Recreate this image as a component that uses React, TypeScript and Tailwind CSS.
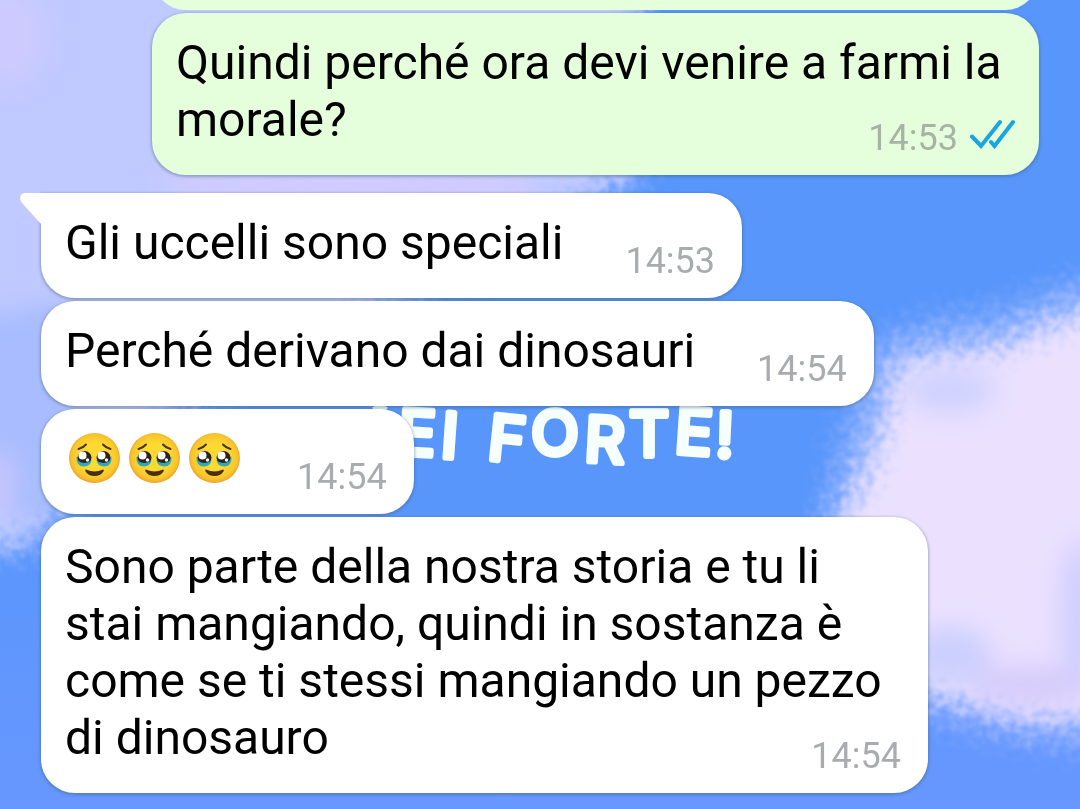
import type { ReactNode } from "react";

type Message = {
  body: ReactNode;
  time: string;
  spacing: string;
  tail?: boolean;
};

function Ticks() {
  return (
    <svg
      viewBox="0 0 46 30"
      className="-mt-[3px] h-[30px] w-[46px]"
      fill="none"
      stroke="#1ba5e0"
      strokeWidth="4"
      strokeLinecap="round"
      aria-label="Letto"
      role="img"
    >
      <path d="M3 17.500 L12 27 L31 3" />
      <path d="M22 23 L25.500 27 L44 3" />
    </svg>
  );
}

function TearyFace() {
  return (
    <svg viewBox="0 0 60 57" className="mt-[3px] h-[54px] w-[60px]" preserveAspectRatio="xMidYMin slice" role="img" aria-label="🥹">
      <defs>
        <radialGradient id="face" cx="50%" cy="48%" r="52%">
          <stop offset="0.5" stopColor="#fdda32" />
          <stop offset="0.85" stopColor="#f8c62c" />
          <stop offset="1" stopColor="#eda131" />
        </radialGradient>
      </defs>
      <ellipse cx="29.500" cy="25" rx="25.500" ry="25" fill="url(#face)" />
      <g fill="none" stroke="#4a3514" strokeWidth="2" strokeLinecap="round">
        <path d="M13.500 16 Q18 15 21 11.500" />
        <path d="M38 11.500 Q41 15 45.500 16" />
      </g>
      <path d="M11.500 24 Q11 33.500 19 33.500 Q25.500 33.500 26.500 27Z" fill="#2fa9bd" />
      <path d="M46.500 24 Q47 33.500 39 33.500 Q32.500 33.500 31.500 27Z" fill="#2fa9bd" />
      <ellipse cx="19.500" cy="24.500" rx="7" ry="6.500" fill="#2e2118" />
      <ellipse cx="38.500" cy="24.500" rx="7" ry="6.500" fill="#2e2118" />
      <path d="M13 28 Q19 31.500 25 28.500 Q23 31.500 19 31.500 Q15 31.500 13 28Z" fill="#2fa9bd" />
      <path d="M45 28 Q39 31.500 33 28.500 Q35 31.500 39 31.500 Q43 31.500 45 28Z" fill="#2fa9bd" />
      <circle cx="17.500" cy="22.500" r="4" fill="#fff" />
      <circle cx="36.500" cy="22.500" r="4" fill="#fff" />
      <circle cx="22.500" cy="27" r="1.700" fill="#fff" />
      <circle cx="41.500" cy="27" r="1.700" fill="#fff" />
      <path d="M21 36.500 Q29.500 40.500 38 36.500 Q39.500 36.500 38.500 38.500 Q35.500 43 29.500 43 Q23.500 43 20.500 38.500 Q19.500 36.500 21 36.500Z" fill="#4a2f12" />
    </svg>
  );
}

const incoming: Message[] = [
  { body: "Gli uccelli sono speciali", time: "14:53", spacing: "ml-[62px]", tail: true },
  { body: "Perché derivano dai dinosauri", time: "14:54", spacing: "ml-[62px]" },
  {
    body: (
      <span className="inline-flex align-top">
        <TearyFace />
        <TearyFace />
        <TearyFace />
      </span>
    ),
    time: "14:54",
    spacing: "ml-[52px]",
  },
  {
    body: "Sono parte della nostra storia e tu li stai mangiando, quindi in sostanza è come se ti stessi mangiando un pezzo di dinosauro",
    time: "14:54",
    spacing: "ml-[62px]",
  },
];

function Wallpaper() {
  return (
    <svg
      className="absolute inset-0 h-full w-full"
      viewBox="0 0 1080 809"
      preserveAspectRatio="xMidYMid slice"
      aria-hidden="true"
    >
      <defs>
        <linearGradient id="sky" x1="0" y1="0" x2="0" y2="1">
          <stop offset="0" stopColor="#5896fb" />
          <stop offset="0.6" stopColor="#5896fb" />
          <stop offset="1" stopColor="#6797ff" />
        </linearGradient>
        <filter id="grain" x="-20%" y="-20%" width="140%" height="140%" colorInterpolationFilters="sRGB">
          <feGaussianBlur stdDeviation="14" result="soft" />
          <feTurbulence type="fractalNoise" baseFrequency="0.12" numOctaves="4" seed="4" />
          <feDisplacementMap in="soft" scale="40" xChannelSelector="R" yChannelSelector="G" result="rough" />
          <feGaussianBlur in="rough" stdDeviation="1" />
        </filter>
        <filter id="mist" x="-50%" y="-50%" width="200%" height="200%" colorInterpolationFilters="sRGB">
          <feGaussianBlur stdDeviation="12" />
        </filter>
      </defs>
      <rect width="1080" height="809" fill="url(#sky)" />
      <g filter="url(#grain)">
        <path
          d="M-60 -60 H640 L640 175 L590 200 L300 350 L160 420 L80 490 L30 545 L-60 560Z"
          fill="#c1caff"
        />
        <path
          d="M1140 270 L1060 285 L1000 310 L930 320 L870 340 L840 440 L820 520 L860 640 L900 705 L960 725 L1020 740 L1140 750Z"
          fill="#c8ceff"
          opacity="0.4"
        />
        <path
          d="M1140 295 L1060 318 L1000 345 L950 352 L895 360 L880 430 L855 490 L820 560 L900 680 L960 700 L1020 718 L1140 722Z"
          fill="#ebe1ff"
        />
      </g>
      <g filter="url(#mist)">
        <path d="M-40 320 L70 300 L90 500 L20 520 L-40 470Z" fill="#9db7ff" opacity="0.7" />
        <ellipse cx="10" cy="35" rx="35" ry="50" fill="#cdcaff" />
        <ellipse cx="350" cy="185" rx="190" ry="30" fill="#cfcbff" />
        <ellipse cx="0" cy="480" rx="18" ry="30" fill="#c6c5fc" />
        <ellipse cx="950" cy="390" rx="45" ry="24" fill="#d0d2ff" />
        <ellipse cx="950" cy="655" rx="42" ry="28" fill="#cbcffe" />
        <ellipse cx="1080" cy="620" rx="20" ry="80" fill="#cfceff" />
        <ellipse cx="1030" cy="685" rx="60" ry="20" fill="#d5ccfb" />
      </g>
      <g
        fill="#f6fffc"
        stroke="#f6fffc"
        strokeWidth="6"
        strokeLinejoin="round"
        fontFamily="Inter, sans-serif"
        fontWeight="400"
        fontSize="62"
        textAnchor="middle"
      >
        <path d="M374 410 Q380 405 386 410" fill="none" />
        <text x="417" y="455" transform="rotate(3 417 435)">E</text>
        <text x="450" y="458" transform="rotate(4 450 435)">I</text>
        <text x="507" y="461" transform="rotate(6 507 438)">F</text>
        <text x="555" y="455">O</text>
        <text x="605" y="462" transform="rotate(3 605 438)">R</text>
        <text x="649" y="456">T</text>
        <text x="694" y="454" transform="rotate(4 694 432)">E</text>
        <text x="725" y="457" transform="rotate(2 725 432)">!</text>
      </g>
    </svg>
  );
}

const bubble =
  "relative max-w-[887px] rounded-[34px] px-6 pt-[21px] pb-[27px] text-[48px] leading-[57px] text-black shadow-[0_1px_3px_1px_rgba(60,90,110,0.4)]";
const stamp = "float-right -mb-2 mt-[31px] flex items-start text-[36px] leading-8";

export default function App() {
  return (
    <main className="relative min-h-screen overflow-hidden bg-[#5896fb] font-[Roboto,sans-serif]">
      <Wallpaper />
      <div className="relative flex flex-col px-[41px] pb-4">
        <div className="h-[10px]">
          <div className="ml-auto h-[10px] w-full max-w-[887px] overflow-hidden">
            <div className="-mt-24 h-[106px] rounded-[34px] bg-[#e5ffdc]" />
          </div>
        </div>
        <section className="mt-[3px] flex justify-end">
          <div className={`${bubble} bg-[#e5ffdc]`}>
            <p className="flow-root">
              Quindi perché ora devi venire a farmi la morale?
              <span className={`${stamp} gap-[11px] text-[#a6b3a5]`}>
                <time>14:53</time>
                <Ticks />
              </span>
            </p>
          </div>
        </section>
        <section className="mt-[18px] flex flex-col items-start gap-[3px]">
          {incoming.map((message, index) => (
            <div key={index} className={message.tail ? `${bubble} rounded-tl-none bg-white` : `${bubble} bg-white`}>
              {message.tail && (
                <svg className="absolute -left-[21px] top-0 h-8 w-[22px]" viewBox="0 0 22 32" aria-hidden="true">
                  <path d="M22 0 H6 C0 0 -1.500 5 2 10 L22 32Z" fill="#fff" />
                </svg>
              )}
              <p className="flow-root">
                {message.body}
                <span className={`${stamp} ${message.spacing} mr-[3px] text-[#a9acaf]`}>
                  <time>{message.time}</time>
                </span>
              </p>
            </div>
          ))}
        </section>
      </div>
    </main>
  );
}
